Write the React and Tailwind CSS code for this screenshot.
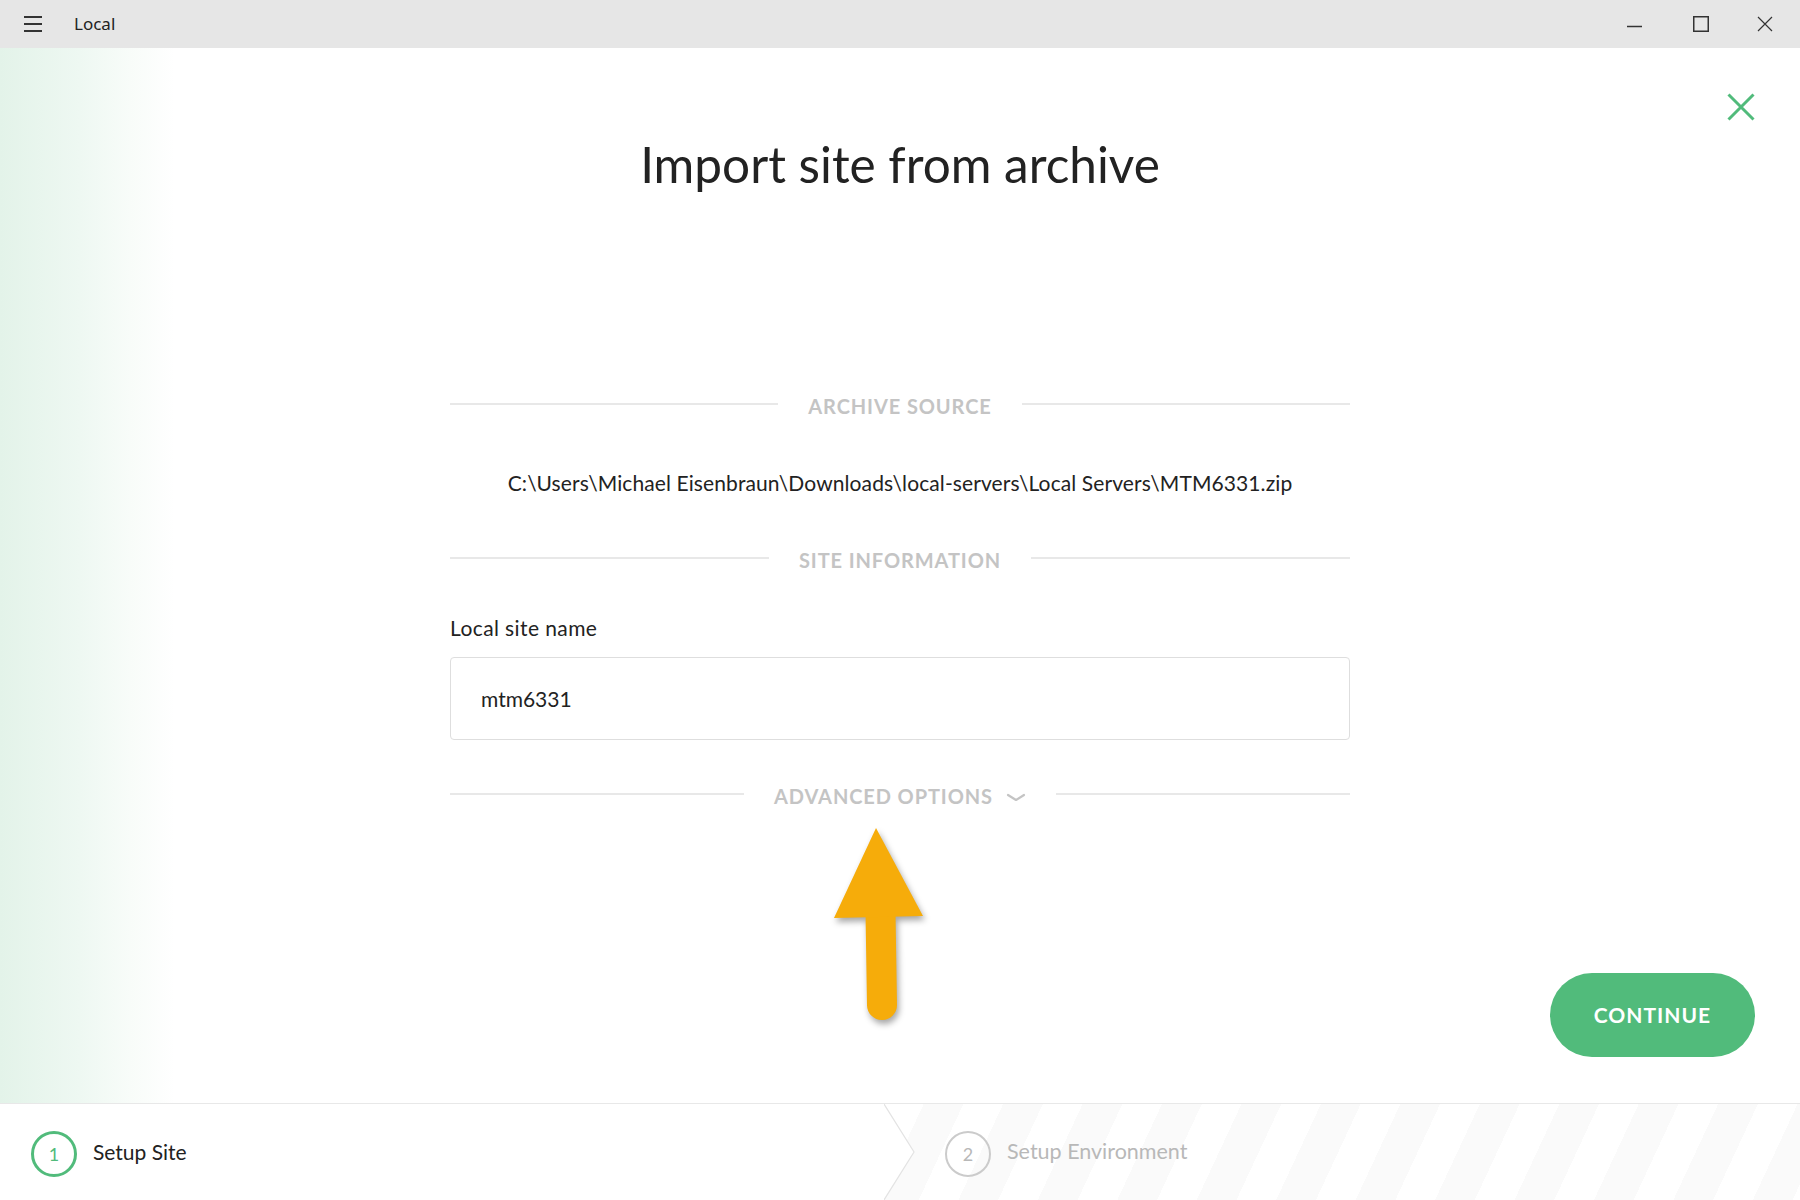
import React from "react";

function Divider({ label, chevron }) {
  return (
    <div className="flex h-[24px] items-center">
      <div className="mb-1 h-[2px] flex-1 bg-[#e8e8e8]" />
      <div className="flex items-center px-[30px] text-[20px] font-bold uppercase leading-[24px] tracking-[0.9px] text-[#c4c4c4]">
        <span>{label}</span>
        {chevron && (
          <svg width="20" height="10" viewBox="0 0 20 10" className="ml-[13px] mt-[4px]">
            <polyline points="2,2 10,7 18,2" fill="none" stroke="#c4c4c4" strokeWidth="2.2" strokeLinecap="round" strokeLinejoin="round" />
          </svg>
        )}
      </div>
      <div className="mb-1 h-[2px] flex-1 bg-[#e8e8e8]" />
    </div>
  );
}

export default function App() {
  return (
    <div className="flex h-[1200px] w-full flex-col overflow-hidden bg-white font-['Lato',_'Noto_Sans',_sans-serif] text-[#222]">
      {/* Title bar */}
      <div className="flex h-[48px] shrink-0 items-center bg-[#e6e6e6] font-['Noto_Sans',_sans-serif]">
        <div className="ml-[24px] flex w-[18px] flex-col gap-[5.5px]">
          <div className="h-[1.5px] bg-[#333]" />
          <div className="h-[1.5px] bg-[#333]" />
          <div className="h-[1.5px] bg-[#333]" />
        </div>
        <div className="ml-[32px] text-[17px] text-[#222]">Local</div>
        <div className="ml-auto flex h-full items-center">
          <div className="flex h-full w-[66px] items-center justify-center">
            <svg width="16" height="16" viewBox="0 0 16 16">
              <line x1="0" y1="10.5" x2="15" y2="10.5" stroke="#333" strokeWidth="1.5" />
            </svg>
          </div>
          <div className="flex h-full w-[66px] items-center justify-center">
            <svg width="16" height="16" viewBox="0 0 16 16">
              <rect x="0.75" y="0.75" width="14.5" height="14.5" fill="none" stroke="#333" strokeWidth="1.5" />
            </svg>
          </div>
          <div className="flex h-full w-[66px] items-center justify-center pr-[4px]">
            <svg width="16" height="16" viewBox="0 0 16 16">
              <path d="M1 1 L15 15 M15 1 L1 15" stroke="#333" strokeWidth="1.2" />
            </svg>
          </div>
        </div>
      </div>

      {/* Main */}
      <div className="relative flex flex-1 flex-col bg-[linear-gradient(to_right,#e3f3e9_0px,#eef8f2_80px,#f8fcf9_130px,#ffffff_175px)]">
        <button className="absolute right-[45px] top-[45px]">
          <svg width="28" height="28" viewBox="0 0 28 28">
            <path d="M1.5 1.5 L26.5 26.5 M26.5 1.5 L1.5 26.5" stroke="#51bb7b" strokeWidth="3" />
          </svg>
        </button>

        <div className="mx-auto w-[900px]">
          <h1 className="mt-[87px] h-[58px] text-center text-[49.5px] font-normal leading-[58px] text-[#222]">
            Import site from archive
          </h1>

          <div className="mt-[201px]">
            <Divider label="Archive Source" />
          </div>

          <div className="mt-[53px] text-center text-[21px] leading-[24px] tracking-[0.1px] text-[#222]">
            C:\Users\Michael Eisenbraun\Downloads\local-servers\Local Servers\MTM6331.zip
          </div>

          <div className="mt-[53px]">
            <Divider label="Site Information" />
          </div>

          <div className="mt-[44px] text-[21px] leading-[24px] tracking-[0.4px] text-[#222]">Local site name</div>

          <div className="mt-[17px] flex h-[83px] items-center rounded-[4px] border border-[#dedede] bg-white px-[30px] text-[21px] text-[#222]">
            mtm6331
          </div>

          <div className="mt-[44px]">
            <Divider label="Advanced Options" chevron />
          </div>
        </div>

        {/* annotation arrow */}
        <svg
          className="absolute left-[820px] top-[772px] drop-shadow-[2px_4px_3px_rgba(0,0,0,0.35)]"
          width="120"
          height="215"
          viewBox="0 0 120 215"
        >
          <line x1="60.5" y1="92" x2="62" y2="185" stroke="#f6ac0a" strokeWidth="30" strokeLinecap="round" />
          <polygon points="56,8 14,98 103,96" fill="#f6ac0a" />
        </svg>

        <div className="mt-auto flex justify-end pb-[46px] pr-[45px]">
          <button className="flex h-[84px] w-[205px] items-center justify-center rounded-full bg-[#51bb7b] text-[21px] font-bold tracking-[1px] text-white">
            CONTINUE
          </button>
        </div>
      </div>

      {/* Footer steps */}
      <div className="flex h-[97px] shrink-0 border-t border-[#e8e8e8] bg-white">
        <div className="flex w-[884px] items-center pl-[31px] pt-[3px]">
          <div className="flex h-[46px] w-[46px] items-center justify-center rounded-full border-[3px] border-[#51bb7b] pt-[2px] text-[18px] text-[#51bb7b]">
            1
          </div>
          <div className="mb-[4px] ml-[16px] text-[21px] text-[#222]">Setup Site</div>
        </div>
        <div className="relative flex flex-1 items-center bg-[repeating-linear-gradient(115deg,#ffffff_0px,#ffffff_36px,#fafafa_36px,#fafafa_72px)] pl-[61px] pt-[3px]">
          <svg className="absolute left-0 top-0" width="32" height="96" viewBox="0 0 32 96">
            <polygon points="0,0 30,48 0,96" fill="#ffffff" />
            <polyline points="0,0 30,48 0,96" fill="none" stroke="#e3e3e3" strokeWidth="1.2" />
          </svg>
          <div className="flex h-[46px] w-[46px] items-center justify-center rounded-full border-[2.5px] border-[#cbcbcb] pt-[2px] text-[18px] text-[#b8b8b8]">
            2
          </div>
          <div className="mb-[4px] ml-[16px] text-[21.5px] text-[#b8b8b8]">Setup Environment</div>
        </div>
      </div>
    </div>
  );
}
